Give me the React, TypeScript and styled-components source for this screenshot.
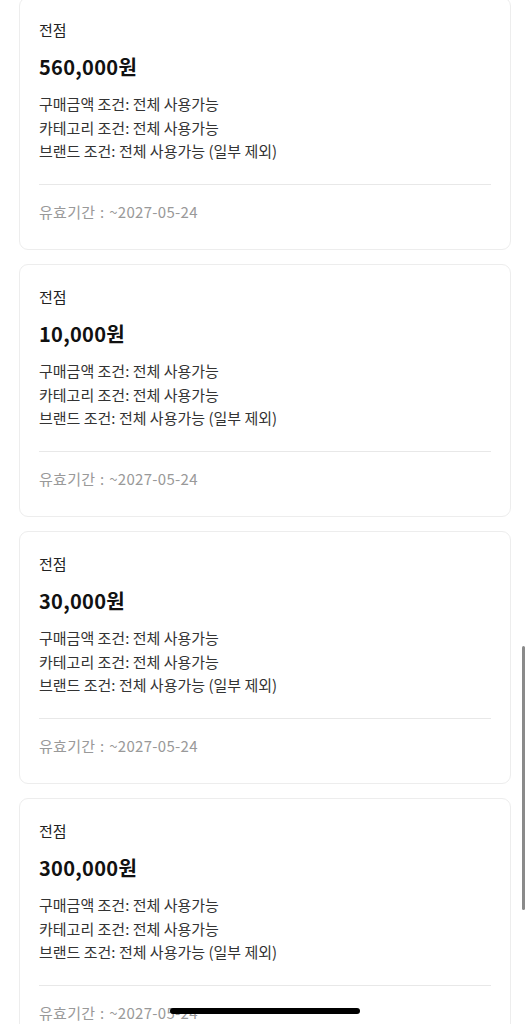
import React from 'react'
import styled, { createGlobalStyle } from 'styled-components'

interface Coupon {
  title: string
  amount: string
  conditions: string[]
  validUntil: string
}

const coupons: Coupon[] = [
  '560,000원',
  '10,000원',
  '30,000원',
  '300,000원',
].map((amount) => ({
  title: '전점',
  amount,
  conditions: [
    '구매금액 조건: 전체 사용가능',
    '카테고리 조건: 전체 사용가능',
    '브랜드 조건: 전체 사용가능 (일부 제외)',
  ],
  validUntil: '유효기간 : ~2027-05-24',
}))

const CouponCard: React.FC<{ coupon: Coupon }> = ({ coupon }) => (
  <Card>
    <Title>{coupon.title}</Title>
    <Amount>{coupon.amount}</Amount>
    <Conditions>
      {coupon.conditions.map((c) => (
        <li key={c}>{c}</li>
      ))}
    </Conditions>
    <Divider />
    <Validity>{coupon.validUntil}</Validity>
  </Card>
)

export default function App() {
  return (
    <>
      <GlobalStyle />
      <List>
        {coupons.map((c, i) => (
          <CouponCard key={i} coupon={c} />
        ))}
      </List>
      <ScrollThumb />
      <HomeIndicator />
    </>
  )
}

const GlobalStyle = createGlobalStyle`
  html, body {
    margin: 0;
    padding: 0;
    background: #fff;
    overflow: hidden;
  }
  body {
    font-family: "Noto Sans CJK KR", "Noto Sans", sans-serif;
    -webkit-font-smoothing: antialiased;
  }
`

const List = styled.div`
  display: flex;
  flex-direction: column;
  gap: 14px;
  margin-top: -3px;
  padding: 0 19px;
`

const Card = styled.section`
  border: 1px solid #ededed;
  border-radius: 9px;
  padding: 20px 19px 25.5px;
`

const Title = styled.div`
  font-size: 15px;
  line-height: 24px;
  color: #222;
`

const Amount = styled.div`
  margin-top: 11px;
  font-size: 20px;
  line-height: 28px;
  font-weight: 700;
  letter-spacing: 0.3px;
  color: #111;
`

const Conditions = styled.ul`
  list-style: none;
  margin: 11px 0 0;
  padding: 0;
  font-size: 15px;
  line-height: 23.5px;
  color: #333;
`

const Divider = styled.hr`
  margin: 21px 0 0;
  border: 0;
  border-top: 1px solid #e8e8e8;
`

const Validity = styled.div`
  margin-top: 15px;
  font-size: 15px;
  line-height: 24px;
  letter-spacing: 0.3px;
  word-spacing: 1px;
  color: #999;
`

const ScrollThumb = styled.div`
  position: fixed;
  right: 5px;
  top: 646px;
  width: 3px;
  height: 264px;
  border-radius: 2px;
  background: #8a8a8a;
`

const HomeIndicator = styled.div`
  position: fixed;
  left: 170px;
  top: 1008px;
  width: 190px;
  height: 6px;
  border-radius: 3px;
  background: #000;
`
